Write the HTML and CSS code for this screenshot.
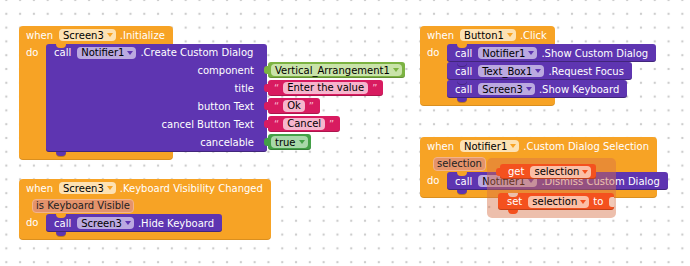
FILE: index.html
```html
<!DOCTYPE html>
<html lang="en">
<head>
    <meta charset="UTF-8">
    <title>Blocks</title>
    <link rel="stylesheet" href="styles.css">
</head>
<body>

<div class="workspace">

    <!-- when Screen3.Initialize -->
    <div class="event ev-init">
        <div class="row"><span class="kw">when</span><span class="dd dd-orange">Screen3</span><span>.Initialize</span></div>
        <div class="do-row">
            <span class="do">do</span>
            <div class="slot">
                <div class="stmt call dialog-call">
                    <div class="row"><span class="kw">call</span><span class="dd dd-purple">Notifier1</span><span>.Create Custom Dialog</span></div>
                    <div class="arg">
                        <span class="arg-label">component</span>
                        <span class="value comp"><span class="dd dd-green">Vertical_Arrangement1</span></span>
                    </div>
                    <div class="arg">
                        <span class="arg-label">title</span>
                        <span class="value text"><span class="quote">&ldquo;</span><span class="str">Enter the value</span><span class="quote">&rdquo;</span></span>
                    </div>
                    <div class="arg">
                        <span class="arg-label">button Text</span>
                        <span class="value text"><span class="quote">&ldquo;</span><span class="str">Ok</span><span class="quote">&rdquo;</span></span>
                    </div>
                    <div class="arg">
                        <span class="arg-label">cancel Button Text</span>
                        <span class="value text"><span class="quote">&ldquo;</span><span class="str">Cancel</span><span class="quote">&rdquo;</span></span>
                    </div>
                    <div class="arg">
                        <span class="arg-label">cancelable</span>
                        <span class="value logic"><span class="dd dd-logic">true</span></span>
                    </div>
                </div>
            </div>
        </div>
    </div>

    <!-- when Screen3.Keyboard Visibility Changed -->
    <div class="event ev-keyboard">
        <div class="row"><span class="kw">when</span><span class="dd dd-orange">Screen3</span><span>.Keyboard Visibility Changed</span></div>
        <div class="row params"><span class="param">is Keyboard Visible</span></div>
        <div class="do-row">
            <span class="do">do</span>
            <div class="slot">
                <div class="stmt call">
                    <div class="row"><span class="kw">call</span><span class="dd dd-purple">Screen3</span><span>.Hide Keyboard</span></div>
                </div>
            </div>
        </div>
    </div>

    <!-- when Button1.Click -->
    <div class="event ev-click">
        <div class="row"><span class="kw">when</span><span class="dd dd-orange">Button1</span><span>.Click</span></div>
        <div class="do-row">
            <span class="do">do</span>
            <div class="slot">
                <div class="stmt call">
                    <div class="row"><span class="kw">call</span><span class="dd dd-purple">Notifier1</span><span>.Show Custom Dialog</span></div>
                </div>
                <div class="stmt call">
                    <div class="row"><span class="kw">call</span><span class="dd dd-purple">Text_Box1</span><span>.Request Focus</span></div>
                </div>
                <div class="stmt call">
                    <div class="row"><span class="kw">call</span><span class="dd dd-purple">Screen3</span><span>.Show Keyboard</span></div>
                </div>
            </div>
        </div>
    </div>

    <!-- when Notifier1.Custom Dialog Selection -->
    <div class="event ev-selection">
        <div class="row"><span class="kw">when</span><span class="dd dd-orange">Notifier1</span><span>.Custom Dialog Selection</span></div>
        <div class="row params"><span class="param">selection</span></div>
        <div class="do-row">
            <span class="do">do</span>
            <div class="slot">
                <div class="stmt call">
                    <div class="row"><span class="kw">call</span><span class="dd dd-purple">Notifier1</span><span>.Dismiss Custom Dialog</span></div>
                </div>
            </div>
        </div>
    </div>

    <!-- hover menu over the selection param -->
    <div class="param-menu">
        <div class="value var-get">
            <span class="kw">get</span><span class="dd dd-var">selection</span>
        </div>
        <div class="var-set">
            <span class="kw">set</span><span class="dd dd-var">selection</span><span>to</span><span class="socket"></span>
        </div>
    </div>

</div>

</body>
</html>
```

FILE: styles.css
```css
body {
    margin: 0;
    padding: 0;
    background-color: #fff;
}

.workspace {
    position: relative;
    width: 690px;
    height: 266px;
    overflow: hidden;
    background-color: #fff;
    background-image: radial-gradient(circle, #cdcdcd 1px, transparent 1.6px);
    background-size: 13.8px 13.8px;
    background-position: -0.6px -6.9px;
    font-family: "DejaVu Sans", sans-serif;
    font-size: 10px;
    color: #fff;
}

/* event blocks (orange C shape) */
.event {
    position: absolute;
    background-color: #f7a325;
    border-radius: 4px;
    padding-bottom: 8px;
    box-shadow: inset 0 -1px 0 rgba(0, 0, 0, 0.12);
}
.ev-init { left: 19px; top: 26px; }
.ev-keyboard { left: 19px; top: 179px; }
.ev-click { left: 420px; top: 26px; }
.ev-selection { left: 420px; top: 137px; }

.row {
    display: flex;
    align-items: center;
    gap: 4px;
    height: 18px;
    padding: 0 8px 0 7px;
    white-space: nowrap;
}
.kw {
    margin-right: 2px;
}
.params {
    padding-left: 13px;
    height: 17px;
}
.param {
    height: 12px;
    line-height: 12px;
    padding: 0 3px;
    background-color: #e4936b;
    border: 1px solid #f2b48c;
    border-radius: 4px;
    color: #222;
}

.do-row {
    display: flex;
}
.do {
    flex: none;
    width: 20px;
    padding-left: 7px;
    height: 18px;
    line-height: 18px;
}
.slot {
    flex-grow: 1;
    width: 0;
}

/* statement blocks */
.stmt {
    position: relative;
    width: max-content;
    border-radius: 3px;
    box-shadow: inset 0 -1px 0 rgba(0, 0, 0, 0.3);
}
.stmt::after {
    content: '';
    position: absolute;
    z-index: 1;
    left: 10px;
    bottom: -4px;
    width: 10px;
    height: 4px;
    background-color: inherit;
    border-radius: 0 0 5px 5px;
    box-shadow: 0 1px 0 rgba(0, 0, 0, 0.25);
}
.slot > .stmt:first-child::before {
    content: '';
    position: absolute;
    left: 10px;
    top: 0;
    width: 10px;
    height: 4px;
    background-color: #f7a325;
    border-radius: 0 0 5px 5px;
}
.call {
    background-color: #5e35b1;
}
.call .row {
    padding-left: 8px;
}

.dialog-call {
    width: 221px;
    padding-bottom: 1px;
}
.dialog-call > .row {
    height: 17px;
}
.arg {
    display: flex;
    align-items: center;
    height: 18px;
}
.arg-label {
    flex: none;
    width: 208px;
    padding-right: 9px;
    text-align: right;
    white-space: nowrap;
}

/* dropdown fields */
.dd {
    display: flex;
    align-items: center;
    height: 12px;
    padding: 0 3px 0 4px;
    border-radius: 4px;
    color: #000;
    white-space: nowrap;
}
.dd::after {
    content: '';
    margin-left: 3px;
    border-left: 3px solid transparent;
    border-right: 3px solid transparent;
    border-top: 4px solid;
}
.dd-orange { background-color: #fde2b4; }
.dd-orange::after { border-top-color: #f7a325; }
.dd-purple { background-color: #bba9e0; }
.dd-purple::after { border-top-color: #5e35b1; }
.dd-green { background-color: #c9e3a9; }
.dd-green::after { border-top-color: #7cb342; }
.dd-logic { background-color: #a8d8a9; }
.dd-logic::after { border-top-color: #43a047; }
.dd-var { background-color: #fbbfa6; }
.dd-var::after { border-top-color: #f4511e; }

/* value blocks with output tab */
.value {
    position: relative;
    flex: none;
    display: flex;
    align-items: center;
    gap: 4px;
    height: 16px;
    margin-left: 5px;
    padding: 0 3px 0 3px;
    border-radius: 3px;
    box-shadow: inset 0 -1px 0 rgba(0, 0, 0, 0.2);
    white-space: nowrap;
}
.value::before {
    content: '';
    position: absolute;
    left: -4px;
    top: 4px;
    width: 5px;
    height: 8px;
    background-color: inherit;
    border-radius: 3px 0 0 3px;
}
.comp { background-color: #7cb342; }
.logic { background-color: #43a047; }
.text {
    background-color: #d81b60;
    padding: 0 6px 0 6px;
}
.quote {
    color: #f8bbd0;
}
.str {
    height: 12px;
    line-height: 12px;
    padding: 0 4px;
    background-color: #f6b5cd;
    border-radius: 4px;
    color: #000;
}

/* variable hover menu */
.param-menu {
    position: absolute;
    left: 487px;
    top: 158px;
    width: 129px;
    height: 60px;
    display: flex;
    flex-direction: column;
    align-items: flex-start;
    gap: 14px;
    padding-top: 6px;
    box-sizing: border-box;
    background-color: rgba(214, 112, 72, 0.45);
    border-radius: 5px;
}
.var-get {
    margin-left: 13px;
    height: 15px;
    padding: 0 5px 0 8px;
    background-color: #f4511e;
}
.var-set {
    position: relative;
    display: flex;
    align-items: center;
    gap: 4px;
    height: 17px;
    margin-left: 11px;
    padding-left: 9px;
    background-color: #f4511e;
    border-radius: 3px;
    box-shadow: inset 0 -1px 0 rgba(0, 0, 0, 0.2);
    white-space: nowrap;
}
.var-set::before {
    content: '';
    position: absolute;
    left: 10px;
    top: 0;
    width: 10px;
    height: 4px;
    background-color: #ecbfac;
    border-radius: 0 0 5px 5px;
}
.var-set::after {
    content: '';
    position: absolute;
    left: 10px;
    bottom: -4px;
    width: 10px;
    height: 4px;
    background-color: #f4511e;
    border-radius: 0 0 5px 5px;
}
.var-set .kw,
.var-get .kw {
    margin-right: 2px;
}
.socket {
    width: 5px;
    height: 10px;
    margin-left: 2px;
    background-color: #f1c8b6;
    border-radius: 3px 0 0 3px;
}
```
